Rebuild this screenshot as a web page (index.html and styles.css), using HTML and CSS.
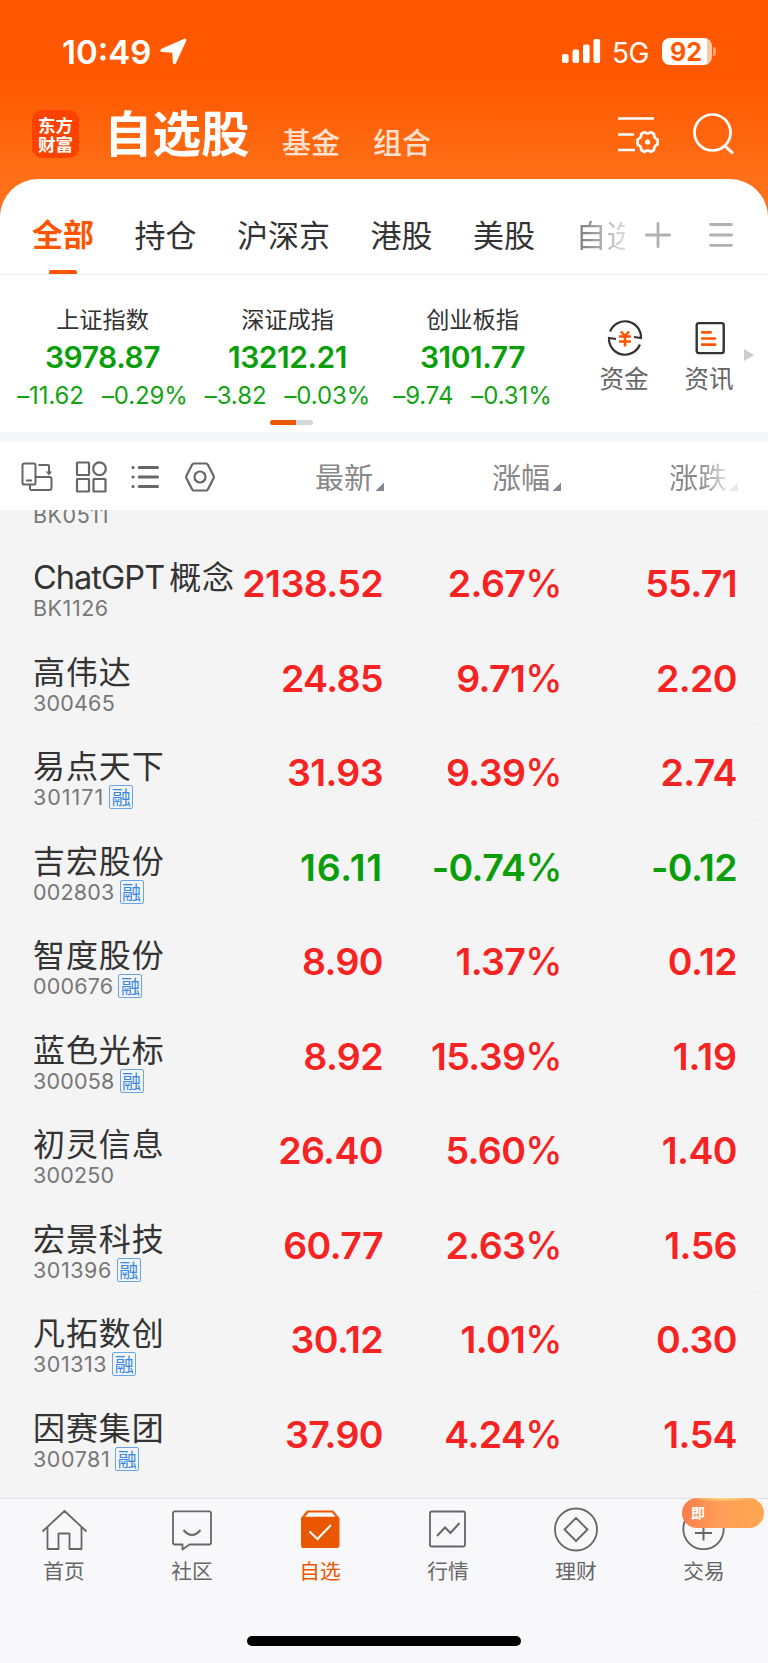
FILE: index.html
```html
<!DOCTYPE html>
<html lang="zh-CN">
<head>
<meta charset="utf-8">
<title>自选股</title>
<link rel="stylesheet" href="styles.css">
</head>
<body>
<div class="app">
  <header class="hero">
    <div class="status">
      <span class="time">10:49</span>
      <svg class="loc" width="27" height="27" viewBox="0 0 27 27"><path d="M24.600 1.200 1.800 11.400c-1.200.6-.9 1.800.3 2l10.700.8.700 10.400c.1 1.200 1.500 1.300 2 .2L25.800 2.300c.3-.8-.4-1.400-1.200-1.100z" fill="#fff" stroke="#fff" stroke-width="1.200" stroke-linejoin="round"/></svg>
      <svg class="signal" width="39" height="25" viewBox="0 0 39 25" fill="#fff"><rect x="0" y="15" width="6.600" height="9" rx="2"/><rect x="10.500" y="10.500" width="6.600" height="13.500" rx="2"/><rect x="21" y="5.500" width="6.600" height="18.500" rx="2"/><rect x="31.500" y="0" width="6.600" height="24" rx="2"/></svg>
      <span class="net">5G</span>
      <span class="battery">92</span><span class="batcap"></span>
    </div>
    <div class="titlebar">
      <div class="logo"><span>东方</span><span>财富</span></div>
      <h1 class="title">自选股</h1>
      <span class="subtitle">基金</span>
      <span class="subtitle">组合</span>
      <svg class="listset" width="42" height="38" viewBox="0 0 42 38" fill="none" stroke="#fff"><path d="M0 2.500h36M0 18.500h16M0 34h17" stroke-width="2.700"/><path d="M26.300 16.200Q29.600 18.600 32.900 16.200L36 18Q35.600 22 39.600 23.600V28.400Q35.600 30 36 34L32.900 35.800Q29.600 33.400 26.300 35.800L23.200 34Q23.600 30 19.600 28.400V23.600Q23.600 22 23.200 18Z" stroke-width="2.700" stroke-linejoin="round"/><circle cx="29.600" cy="26" r="2.600" fill="#fff" stroke="none"/></svg>
      <svg class="search" width="42" height="42" viewBox="0 0 42 42" fill="none" stroke="#fff" stroke-width="2.700"><circle cx="19.500" cy="19.500" r="18"/><path d="M31.500 32.500 40 40.500" stroke-width="3"/></svg>
    </div>
  </header>

  <section class="sheet">
    <nav class="tabs">
      <span class="tab on">全部</span><span class="tab">持仓</span><span class="tab">沪深京</span><span class="tab">港股</span><span class="tab">美股</span><span class="tab fade">自选</span>
      <svg class="plus" width="26" height="26" viewBox="0 0 26 26" stroke="#b0b0b0" stroke-width="2.800" stroke-linecap="round"><path d="M1.300 13h23.400M13 1.300v23.400"/></svg>
      <svg class="menu" width="24" height="26" viewBox="0 0 24 26" stroke="#b0b0b0" stroke-width="2.800" stroke-linecap="round"><path d="M1.500 2.500h21M1.500 13h21M1.500 23.300h21"/></svg>
    </nav>
    <div class="indices">
      <div class="index"><div class="iname">上证指数</div><div class="ival">3978.87</div><div class="ichg"><span>–11.62</span><span>–0.29%</span></div></div>
      <div class="index"><div class="iname">深证成指</div><div class="ival">13212.21</div><div class="ichg"><span>–3.82</span><span>–0.03%</span></div></div>
      <div class="index"><div class="iname">创业板指</div><div class="ival">3101.77</div><div class="ichg"><span>–9.74</span><span>–0.31%</span></div></div>
      <div class="tool fund">
        <svg width="36" height="36" viewBox="0 0 36 36" fill="none" stroke="#333" stroke-width="2.200"><path d="M3.100 11.500A16 16 0 0 1 34 18l-7-1M32.900 24.500A16 16 0 0 1 2 18l7 1"/><path d="M14 11.500l4 4.500 4-4.500M12 16.500h12M12 21.500h12M18 16v10.500" stroke="#ff5500" stroke-width="2.600"/></svg>
        <span>资金</span>
      </div>
      <div class="tool news">
        <svg width="36" height="36" viewBox="0 0 36 36" fill="none" stroke="#333" stroke-width="2.400"><rect x="4.700" y="3.100" width="27" height="30" rx="2"/><path d="M10.200 12.300h8.500M10.200 18.500h12.800M10.200 24.700h12.800" stroke="#ff5500" stroke-width="2.700" stroke-linecap="round"/></svg>
        <span>资讯</span>
      </div>
      <span class="more"></span>
    </div>
    <div class="pager"><i></i></div>
  </section>

  <section class="columns">
    <svg class="ic1" width="32" height="30" viewBox="0 0 32 30" fill="none" stroke="#666" stroke-width="2"><rect x="1.500" y="1.500" width="13" height="21" rx="1.800"/><path d="M5 18.500h6M17.500 3h9.500q1 0 1 1v7M15 15h13.500q2 0 2 2v9q0 2-2 2h-18q-1.500 0-1.500-1.500V23"/><path d="M24.800 9.500h6.400L28 13.500z" fill="#666" stroke="none"/></svg>
    <svg class="ic2" width="32" height="32" viewBox="0 0 32 32" fill="none" stroke="#666" stroke-width="2.200"><rect x="2" y="1.500" width="12" height="12.500" rx=".5"/><circle cx="24.500" cy="7.700" r="6.300"/><rect x="2" y="18" width="12" height="12.500" rx=".5"/><rect x="18.500" y="18" width="12" height="12.500" rx=".5"/></svg>
    <svg class="ic3" width="28" height="24" viewBox="0 0 28 24" stroke="#666" stroke-width="3" stroke-linecap="round"><path d="M8.200 2.500h18.300M8.200 12h18.300M8.200 21.500h18.300M1.900 2.500h.2M1.900 12h.2M1.900 21.500h.2"/></svg>
    <svg class="ic4" width="30" height="30" viewBox="0 0 30 30" fill="none" stroke="#666" stroke-width="2.200"><path d="M9 1.500h12q1.200 0 1.800 1l5.800 11.300q.6 1.200 0 2.400l-5.800 11.300q-.6 1-1.800 1H9q-1.200 0-1.800-1L1.400 16.200q-.6-1.200 0-2.400L7.200 2.500q.6-1 1.800-1z"/><circle cx="15" cy="15" r="5.500"/></svg>
    <span class="col c1">最新<i></i></span>
    <span class="col c2">涨幅<i></i></span>
    <span class="col c3">涨跌<i></i></span>
  </section>

  <main class="list">
    <div class="row cut"><div class="who"><div class="code loose">BK0511</div></div></div>
    <div class="row"><div class="who"><div class="name"><span class="latin">ChatGPT</span>概念</div><div class="code loose">BK1126</div></div><b>2138.52</b><b>2.67<em>%</em></b><b>55.71</b></div>
    <div class="row"><div class="who"><div class="name">高伟达</div><div class="code">300465</div></div><b>24.85</b><b>9.71<em>%</em></b><b>2.20</b></div>
    <div class="row"><div class="who"><div class="name">易点天下</div><div class="code looser">301171<span class="tag">融</span></div></div><b>31.93</b><b>9.39<em>%</em></b><b>2.74</b></div>
    <div class="row down"><div class="who"><div class="name">吉宏股份</div><div class="code">002803<span class="tag">融</span></div></div><b class="ones">16.11</b><b>-0.74<em>%</em></b><b>-0.12</b></div>
    <div class="row"><div class="who"><div class="name">智度股份</div><div class="code">000676<span class="tag">融</span></div></div><b>8.90</b><b>1.37<em>%</em></b><b>0.12</b></div>
    <div class="row"><div class="who"><div class="name">蓝色光标</div><div class="code">300058<span class="tag">融</span></div></div><b>8.92</b><b>15.39<em>%</em></b><b class="ones short">1.19</b></div>
    <div class="row"><div class="who"><div class="name">初灵信息</div><div class="code">300250</div></div><b>26.40</b><b>5.60<em>%</em></b><b>1.40</b></div>
    <div class="row"><div class="who"><div class="name">宏景科技</div><div class="code loose">301396<span class="tag">融</span></div></div><b>60.77</b><b>2.63<em>%</em></b><b>1.56</b></div>
    <div class="row"><div class="who"><div class="name">凡拓数创</div><div class="code loose">301313<span class="tag">融</span></div></div><b>30.12</b><b>1.01<em>%</em></b><b>0.30</b></div>
    <div class="row"><div class="who"><div class="name">因赛集团</div><div class="code loose">300781<span class="tag">融</span></div></div><b>37.90</b><b>4.24<em>%</em></b><b>1.54</b></div>
  </main>

  <footer class="dock">
    <div class="items">
      <div class="item"><svg width="46" height="46" viewBox="0 0 46 46" fill="none" stroke="#666" stroke-width="1.800"><path d="M1.500 24.500 23.500 4l22 20.500M6.500 20.500V42h11V26.500h11V42h12V20.500" stroke-linejoin="round"/></svg><span>首页</span></div>
      <div class="item"><svg width="46" height="46" viewBox="0 0 46 46" fill="none" stroke="#666" stroke-width="1.800" stroke-linejoin="round"><path d="M6 4.300h34q2 0 2 2v29.200q0 2-2 2H20.500l-7 5v-5H6q-2 0-2-2V6.300q0-2 2-2z"/><path d="M14.500 23q8.500 10 17 0" stroke-width="2"/></svg><span>社区</span></div>
      <div class="item on"><svg width="46" height="46" viewBox="0 0 46 46"><path d="M10 3.500h26l6.500 7.500v27q0 3-3 3h-33.500q-2 0-2-3V11z" fill="#eb5600"/><path d="M11.500 5.500h23.500l3.500 4.300H8z" fill="#f8f8fa"/><path d="M12.500 24.500l8 7.500 13.500-14" fill="none" stroke="#fff" stroke-width="2"/></svg><span>自选</span></div>
      <div class="item"><svg width="46" height="46" viewBox="0 0 46 46" fill="none" stroke="#666" stroke-width="1.800"><rect x="5" y="4.500" width="35" height="35" rx="1.500"/><path d="M12 29l8-8.500 5.500 5.500 9-10" stroke-width="2"/></svg><span>行情</span></div>
      <div class="item"><svg width="46" height="46" viewBox="0 0 46 46" fill="none" stroke="#666" stroke-width="1.800"><circle cx="23" cy="22.500" r="21"/><path d="M23 11 34.500 22.500 23 34 11.500 22.500z" stroke-linejoin="round"/></svg><span>理财</span></div>
      <div class="item"><svg width="46" height="46" viewBox="0 0 46 46" fill="none" stroke="#666" stroke-width="1.800"><circle cx="22.500" cy="22" r="20.200"/><path d="M14 26h17M22.500 17.500v16" stroke-width="2"/></svg><span>交易</span><div class="promo">即</div></div>
    </div>
    <div class="homebar"></div>
  </footer>
</div>
</body>
</html>
```
FILE: styles.css
```css
* { box-sizing: border-box; }
body { margin: 0; font-family: Inter, "Noto Sans CJK SC", sans-serif; }
svg { display: block; flex: none; overflow: visible; }
i, em { font-style: normal; }
.app { width: 768px; height: 1663px; overflow: hidden; display: flex; flex-direction: column; background: #f4f4f4; }

/* Orange header */
.hero { height: 219px; margin-bottom: -40px; flex: none; background: linear-gradient(#ff5800 0, #ff5800 78px, #ff7018 180px, #ff7018 100%); color: #fff; }
.status { height: 102px; display: flex; align-items: center; padding-left: 62px; }
.time { width: 98px; font-size: 33px; font-weight: 600; line-height: 40px; padding-top: 2px; white-space: nowrap; }
.signal { margin-left: 375px; }
.net { margin-left: 11px; width: 50px; font-size: 28px; letter-spacing: -.5px; line-height: 34px; padding-top: 3px; }
.battery { width: 50px; height: 27px; border-radius: 8px; background: linear-gradient(90deg, #fff 45px, #ffc4a3 45px); color: #ff5800; font-weight: 700; font-size: 25px; line-height: 28px; padding-right: 2px; text-align: center; }
.batcap { width: 3px; height: 9px; margin-left: 1px; border-radius: 0 3px 3px 0; background: #ffa477; }
.titlebar { height: 77px; display: flex; padding-left: 32px; }
.logo { width: 47px; height: 48px; margin-top: 8px; border-radius: 10px; background: #ff4200; display: flex; flex-direction: column; align-items: center; justify-content: center; font: 700 17.500px/19.500px "Noto Sans CJK SC", sans-serif; }
.title { margin: 5px 0 0 25px; width: 178px; font: 700 48.500px/48px "Noto Sans CJK SC", sans-serif; white-space: nowrap; }
.subtitle { width: 59px; margin: 24px 32px 0 0; font: 500 29px/30px "Noto Sans CJK SC", sans-serif; color: #ffe1d0; white-space: nowrap; }
.listset { margin: 14px 0 0 154px; }
.search { margin: 11px 0 0 33px; }

/* White sheet */
.sheet { height: 253px; flex: none; background: #fff; border-radius: 38px 38px 0 0; }
.tabs { height: 96px; display: flex; align-items: center; padding: 15px 0 0 32px; border-bottom: 1px solid #ececec; }
.tab { flex: none; font: 400 31px/32px "Noto Sans CJK SC", sans-serif; color: #333; margin: -1px 40.500px 0 0; white-space: nowrap; }
.tab.on { color: #ff5500; font-weight: 700; display: flex; flex-direction: column; align-items: center; height: 80px; padding-top: 23px; margin-top: 0; }
.tab.on::after { content: ""; width: 28px; height: 4px; border-radius: 2px 2px 0 0; background: #ff5500; margin-top: 21px; }
.tab.fade { width: 49px; margin-right: 20px; overflow: hidden; background: linear-gradient(90deg, #777, #ddd); background-clip: text; color: transparent; }
.plus, .menu { margin-top: 1px; }
.menu { margin-left: 38px; }
.indices { height: 145px; display: flex; padding-left: 10px; }
.index { width: 185px; flex: none; text-align: center; padding-top: 29px; }
.iname { font: 400 23.200px/28px "Noto Sans CJK SC", sans-serif; color: #333; }
.ival { font-weight: 600; font-size: 30px; letter-spacing: -.45px; line-height: 36px; margin-top: 7px; color: #0a9f0a; }
.ichg { display: flex; justify-content: center; gap: 18px; font-size: 24px; letter-spacing: -.1px; line-height: 30px; margin-top: 6px; color: #12a412; white-space: nowrap; }
.tool { width: 60px; padding-top: 45px; display: flex; flex-direction: column; align-items: center; color: #666; font: 400 24.500px/30px "Noto Sans CJK SC", sans-serif; white-space: nowrap; }
.tool span { margin: 7px 2px 0 0; }
.fund { margin-left: 30px; }
.news { margin-left: 25px; }
.more { margin: 74px 0 0 4px; width: 0; height: 0; border: 6.500px solid transparent; border-left: 10px solid #ccc; border-right: 0; }
.pager { width: 43px; height: 5px; margin-left: 270px; border-radius: 3px; background: #d3d7de; overflow: hidden; }
.pager i { display: block; width: 26px; height: 5px; background: #eb5600; }

/* Column toolbar */
.columns { height: 78px; flex: none; display: flex; background: #fff; border-top: 10px solid #f6f7f9; }
.ic1 { margin: 20px 0 0 21px; }
.ic2 { margin: 19px 0 0 22px; }
.ic3 { margin: 23px 0 0 24px; }
.ic4 { margin: 20px 0 0 26px; }
.col { width: 69px; flex: none; display: flex; align-items: flex-end; height: 49px; font: 400 29px/30px "Noto Sans CJK SC", sans-serif; color: #888; white-space: nowrap; }
.col i { flex: none; width: 8px; height: 8px; margin-left: 3px; background: linear-gradient(135deg, transparent 50%, #888894 50%); }
.c1 { margin-left: 100px; }
.c2 { margin-left: 108px; }
.c3 { margin-left: 108px; background: linear-gradient(90deg, #888 30px, #eee 62px); background-clip: text; color: transparent; }
.c3 i { opacity: .2; }

/* Quotes */
.list { height: 988px; flex: none; overflow: hidden; background: #f4f4f4; }
.row { height: 94.500px; margin: 0 10px 0 32px; border-bottom: 1px solid #efefef; display: flex; color: #f72323; }
.row.cut { height: 26px; }
.row.cut .who { padding: 0 0 0 1px; margin-top: -8px; }
.row.cut .code { margin-top: 0; }
.row.down { color: #0a9f0a; }
.who { width: 205px; flex: none; padding: 22px 0 0 1px; }
.name { height: 34px; font: 400 32px/34px "Noto Sans CJK SC", sans-serif; letter-spacing: .9px; color: #333; white-space: nowrap; }
.latin { font-family: Inter, sans-serif; font-size: 32.500px; line-height: 30px; letter-spacing: -.95px; margin-right: 5px; }
.code { display: flex; align-items: center; height: 26px; margin-top: 3px; font-size: 21.500px; line-height: 26px; letter-spacing: .2px; color: #777; }
.code.loose { letter-spacing: .55px; }
.code.looser { letter-spacing: 1px; }
.tag { width: 24px; height: 24px; margin-left: 5px; border: 1px solid #67a4e8; border-radius: 2px; font: 400 19px/21px "Noto Sans CJK SC", sans-serif; letter-spacing: 0; display: flex; justify-content: center; color: #3488e4; }
.row b { flex: none; display: flex; justify-content: flex-end; width: 177px; padding-top: 24px; font-weight: 600; font-size: 37.500px; letter-spacing: -.6px; line-height: 47px; white-space: nowrap; }
.who + b { width: 146px; }
.row .ones { letter-spacing: .8px; }
.row .short { letter-spacing: 0; }
.row em { font-weight: 500; margin-right: -2px; }

/* Bottom dock */
.dock { height: 165px; flex: none; background: #f8f8fb; border-top: 1px solid #dfdfe3; }
.items { display: flex; height: 137px; }
.item { position: relative; width: 128px; padding-top: 8px; display: flex; flex-direction: column; align-items: center; color: #666; font: 400 20.700px/28px "Noto Sans CJK SC", sans-serif; }
.item span { margin-top: 3px; }
.item.on { color: #eb5600; }
.promo { position: absolute; left: 42px; top: -1px; width: 82px; height: 30px; border-radius: 15px; padding-left: 9px; background: radial-gradient(ellipse 32px 4px at 50% 0, #ffe08a 0, transparent 100%), linear-gradient(90deg, #fb7c4b, #ff9d58 45%, #ffa84f); color: #fff; font: 700 14px/29px "Noto Sans CJK SC", sans-serif; }
.homebar { width: 274px; height: 10px; margin: 0 auto; border-radius: 5px; background: #000; }
```
